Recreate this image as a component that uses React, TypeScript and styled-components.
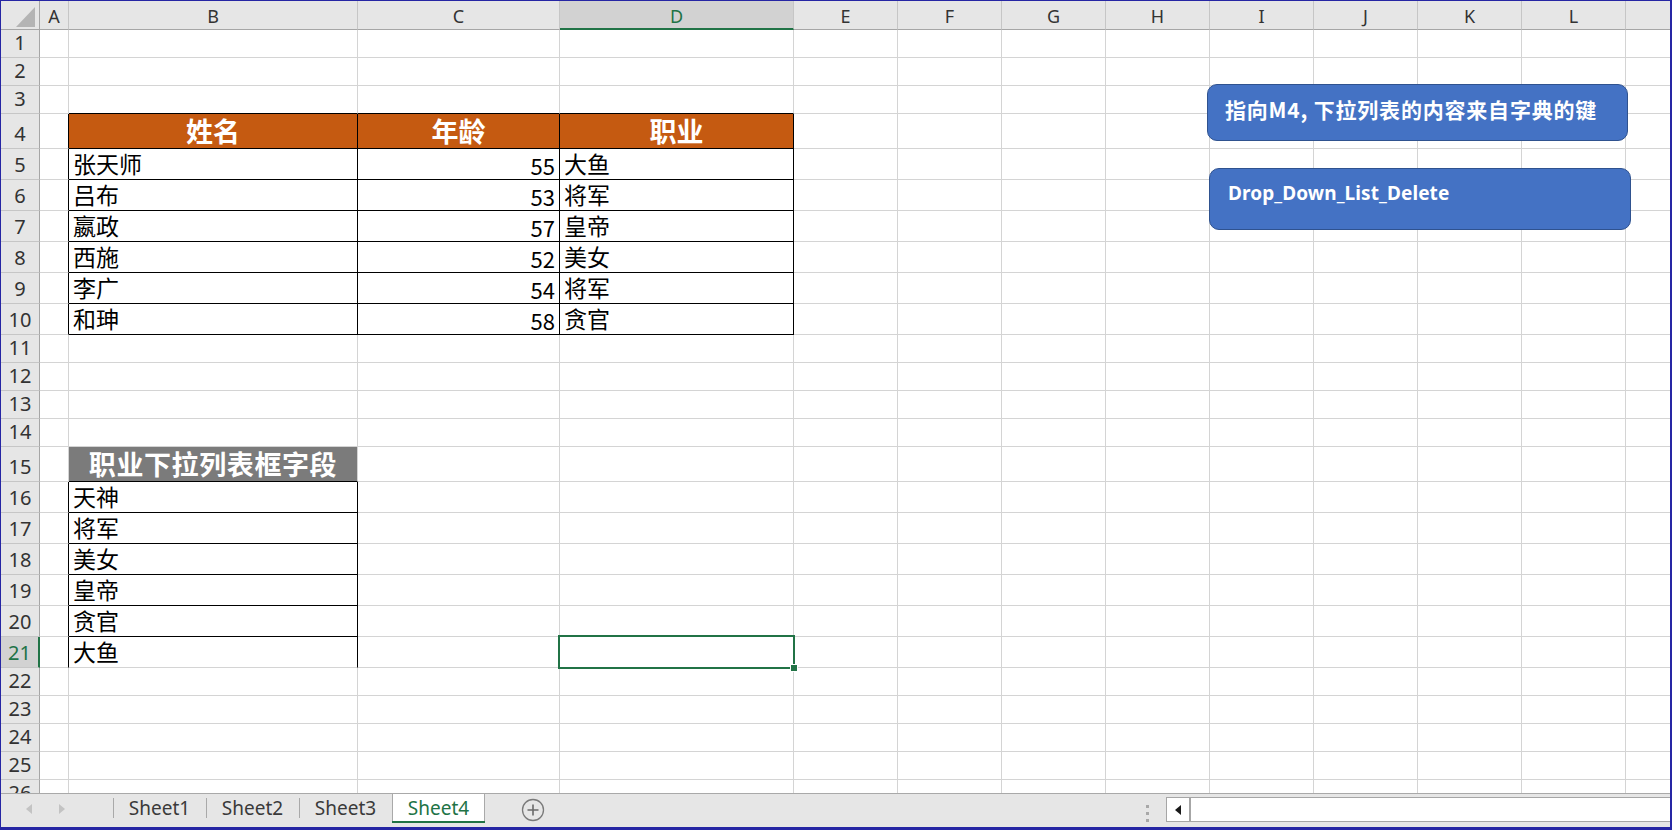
import React from 'react';
import styled, { createGlobalStyle } from 'styled-components';

type Kind = 'blank' | 'head' | 'field' | 'text' | 'num';

interface CellData {
  text: string;
  kind: Kind;
}

const GREEN = '#217346';
const GRID = '#d4d4d4';
const BLACK = '#000000';

const COLUMNS = ['A', 'B', 'C', 'D', 'E', 'F', 'G', 'H', 'I', 'J', 'K', 'L', 'M'];
const COL_WIDTHS = [29, 289, 202, 234, 104, 104, 104, 104, 104, 104, 104, 104, 104];
const ROW_HEIGHTS = [
  28, 28, 28, 35, 31, 31, 31, 31, 31, 31, 28, 28, 28, 28, 35, 31, 31, 31, 31, 31, 31, 28, 28, 28, 28, 28,
];

const people = [
  ['张天师', '55', '大鱼'],
  ['吕布', '53', '将军'],
  ['嬴政', '57', '皇帝'],
  ['西施', '52', '美女'],
  ['李广', '54', '将军'],
  ['和珅', '58', '贪官'],
];
const jobs = ['天神', '将军', '美女', '皇帝', '贪官', '大鱼'];

const cells: Record<string, CellData> = {
  B4: { text: '姓名', kind: 'head' },
  C4: { text: '年龄', kind: 'head' },
  D4: { text: '职业', kind: 'head' },
  B15: { text: '职业下拉列表框字段', kind: 'field' },
};
people.forEach(([name, age, job], i) => {
  cells[`B${5 + i}`] = { text: name, kind: 'text' };
  cells[`C${5 + i}`] = { text: age, kind: 'num' };
  cells[`D${5 + i}`] = { text: job, kind: 'text' };
});
jobs.forEach((job, i) => {
  cells[`B${16 + i}`] = { text: job, kind: 'text' };
});

// table ranges with black borders: B4:D10 and B16:B21 (no bottom line on B21)
const inMain = (r: number, c: number) => r >= 4 && r <= 10 && c >= 1 && c <= 3;
const inList = (r: number, c: number) => r >= 16 && r <= 21 && c === 1;

const rightColor = (r: number, c: number) =>
  inMain(r, c) || inMain(r, c + 1) || inList(r, c) || inList(r, c + 1) ? BLACK : GRID;
const bottomColor = (r: number, c: number) =>
  inMain(r, c) || inMain(r + 1, c) || (inList(r, c) && r < 21) || inList(r + 1, c) ? BLACK : GRID;

const tabs = ['Sheet1', 'Sheet2', 'Sheet3', 'Sheet4'];

const App: React.FC = () => {
  return (
    <Frame>
      <GlobalStyle />
      <SheetArea>
        <Grid>
          <Corner>
            <svg width="39" height="29" viewBox="0 0 39 29">
              <polygon points="34,6 34,26 15,26" fill="#b4b4b4" />
            </svg>
          </Corner>
          {COLUMNS.map((c) => (
            <ColHead key={c} $active={c === 'D'}>
              {c}
            </ColHead>
          ))}
          {ROW_HEIGHTS.map((_, ri) => {
            const r = ri + 1;
            return (
              <React.Fragment key={r}>
                <RowHead $active={r === 21}>{r}</RowHead>
                {COLUMNS.map((c, ci) => {
                  const data = cells[`${c}${r}`];
                  return (
                    <Cell
                      key={c}
                      $kind={data ? data.kind : 'blank'}
                      $right={rightColor(r, ci)}
                      $bottom={bottomColor(r, ci)}
                    >
                      {data?.text}
                    </Cell>
                  );
                })}
              </React.Fragment>
            );
          })}
        </Grid>

        <Shape $left={1206} $top={83} $width={421} $height={57}>
          指向M4, 下拉列表的内容来自字典的键
        </Shape>
        <Shape $left={1208} $top={167} $width={422} $height={62} $latin>
          Drop_Down_List_Delete
        </Shape>

        <Selection>
          <FillHandle />
        </Selection>
      </SheetArea>

      <TabBar>
        <NavArrows>
          <svg width="8" height="12" viewBox="0 0 8 12">
            <polygon points="7,1 7,11 1,6" fill="#c3c3c3" />
          </svg>
          <svg width="8" height="12" viewBox="0 0 8 12">
            <polygon points="1,1 1,11 7,6" fill="#c3c3c3" />
          </svg>
        </NavArrows>
        {tabs.map((t) => (
          <Tab key={t} $active={t === 'Sheet4'}>
            {t}
          </Tab>
        ))}
        <AddSheet>
          <svg width="24" height="24" viewBox="0 0 24 24">
            <circle cx="12" cy="12" r="10.5" fill="none" stroke="#7a7a7a" strokeWidth="1.3" />
            <path d="M12 6.5v11M6.5 12h11" stroke="#6a6a6a" strokeWidth="1.6" />
          </svg>
        </AddSheet>
        <Spacer />
        <Grip>
          <i />
          <i />
          <i />
        </Grip>
        <HScroll>
          <ScrollButton>
            <svg width="8" height="12" viewBox="0 0 8 12">
              <polygon points="7,1 7,11 1,6" fill="#1a1a1a" />
            </svg>
          </ScrollButton>
          <ScrollTrack />
        </HScroll>
      </TabBar>
      <TaskStrip />
    </Frame>
  );
};

const GlobalStyle = createGlobalStyle`
  html, body {
    margin: 0;
    padding: 0;
    background: #ffffff;
  }
  body {
    font-family: "Noto Sans CJK SC", "Noto Sans", sans-serif;
  }
`;

const Frame = styled.div`
  position: relative;
  width: 1672px;
  height: 830px;
  box-sizing: border-box;
  border-style: solid;
  border-color: #2626a4;
  border-width: 1px 2px 3px 1px;
  display: flex;
  flex-direction: column;
  overflow: hidden;
  background: #ffffff;
`;

const SheetArea = styled.div`
  position: relative;
  height: 792px;
  overflow: hidden;
  flex-shrink: 0;
`;

const Grid = styled.div`
  display: grid;
  grid-template-columns: 39px ${COL_WIDTHS.map((w) => `${w}px`).join(' ')};
  grid-template-rows: 29px ${ROW_HEIGHTS.map((h) => `${h}px`).join(' ')};
`;

const Corner = styled.div`
  box-sizing: border-box;
  background: #e6e6e6;
  border-right: 1px solid #a6a6a6;
  border-bottom: 1px solid #a6a6a6;
  svg {
    display: block;
  }
`;

const ColHead = styled.div<{ $active?: boolean }>`
  box-sizing: border-box;
  background: ${(p) => (p.$active ? '#d2d2d2' : '#e6e6e6')};
  border-right: 1px solid #c6c6c6;
  border-bottom: ${(p) => (p.$active ? `2px solid ${GREEN}` : '1px solid #a6a6a6')};
  color: ${(p) => (p.$active ? GREEN : '#333333')};
  font-family: "Noto Sans", "Liberation Sans", sans-serif;
  font-size: 18px;
  display: flex;
  align-items: center;
  justify-content: center;
  padding-top: 2px;
  overflow: hidden;
`;

const RowHead = styled.div<{ $active?: boolean }>`
  box-sizing: border-box;
  background: ${(p) => (p.$active ? '#d2d2d2' : '#e6e6e6')};
  border-right: ${(p) => (p.$active ? `2px solid ${GREEN}` : '1px solid #a6a6a6')};
  border-bottom: 1px solid #c6c6c6;
  color: ${(p) => (p.$active ? GREEN : '#333333')};
  font-family: "Noto Sans", "Liberation Sans", sans-serif;
  font-size: 20px;
  line-height: 22px;
  display: flex;
  align-items: flex-end;
  justify-content: center;
  padding-bottom: 3px;
`;

const kindStyles: Record<Kind, string> = {
  blank: '',
  head: `
    background: #c55a11;
    color: #ffffff;
    font-weight: 700;
    font-size: 27px;
    justify-content: center;
  `,
  field: `
    background: #7b7b7b;
    color: #ffffff;
    font-weight: 700;
    font-size: 27px;
    letter-spacing: 0.6px;
    justify-content: center;
  `,
  text: `
    color: #000000;
    font-size: 23px;
    justify-content: flex-start;
  `,
  num: `
    color: #000000;
    font-size: 22px;
    justify-content: flex-end;
  `,
};

const Cell = styled.div<{ $kind: Kind; $right: string; $bottom: string }>`
  box-sizing: border-box;
  border-right: 1px solid ${(p) => p.$right};
  border-bottom: 1px solid ${(p) => p.$bottom};
  display: flex;
  align-items: flex-end;
  padding: 0 4px 1px 4px;
  white-space: nowrap;
  line-height: 1.2;
  ${(p) => kindStyles[p.$kind]}
`;

const Shape = styled.div<{ $left: number; $top: number; $width: number; $height: number; $latin?: boolean }>`
  position: absolute;
  left: ${(p) => p.$left}px;
  top: ${(p) => p.$top}px;
  width: ${(p) => p.$width}px;
  height: ${(p) => p.$height}px;
  box-sizing: border-box;
  padding: ${(p) => (p.$latin ? '12px 18px' : '11px 17px')};
  background: #4472c4;
  border: 1.5px solid #2f528f;
  border-radius: 10px;
  color: #ffffff;
  font-family: ${(p) => (p.$latin ? '"Noto Sans", sans-serif' : '"Noto Sans CJK SC", sans-serif')};
  font-weight: 700;
  font-size: ${(p) => (p.$latin ? '19px' : '21px')};
  letter-spacing: ${(p) => (p.$latin ? '0.1px' : '0.8px')};
  line-height: 1.3;
  white-space: nowrap;
`;

const Selection = styled.div`
  position: absolute;
  left: 557px;
  top: 634px;
  width: 237px;
  height: 34px;
  box-sizing: border-box;
  border: 2px solid ${GREEN};
  pointer-events: none;
`;

const FillHandle = styled.div`
  position: absolute;
  right: -4px;
  bottom: -4px;
  width: 6px;
  height: 6px;
  background: ${GREEN};
  box-shadow: 0 0 0 1px #ffffff;
`;

const TabBar = styled.div`
  flex: 1;
  box-sizing: border-box;
  border-top: 1px solid #a9a9a9;
  background: #e6e6e6;
  display: flex;
  align-items: flex-start;
  font-family: "Noto Sans", "Liberation Sans", sans-serif;
`;

const NavArrows = styled.div`
  width: 112px;
  height: 29px;
  box-sizing: border-box;
  display: flex;
  align-items: center;
  gap: 25px;
  padding-left: 24px;
  svg {
    display: block;
  }
`;

const Tab = styled.div<{ $active?: boolean }>`
  position: relative;
  width: 93px;
  height: 29px;
  box-sizing: border-box;
  display: flex;
  align-items: center;
  justify-content: center;
  font-size: 19px;
  color: ${(p) => (p.$active ? GREEN : '#3a3a3a')};
  background: ${(p) => (p.$active ? '#ffffff' : 'transparent')};
  border-bottom: ${(p) => (p.$active ? `2px solid ${GREEN}` : '2px solid transparent')};
  box-shadow: ${(p) => (p.$active ? 'inset 1px 0 0 #a9a9a9, inset -1px 0 0 #a9a9a9' : 'none')};

  &::before {
    content: '';
    display: ${(p) => (p.$active ? 'none' : 'block')};
    position: absolute;
    left: 0;
    top: 4px;
    bottom: 3px;
    width: 1px;
    background: #a9a9a9;
  }
`;

const AddSheet = styled.div`
  margin-left: 36px;
  margin-top: 4px;
  svg {
    display: block;
  }
`;

const Spacer = styled.div`
  flex: 1;
`;

const Grip = styled.div`
  width: 4px;
  margin-top: 11px;
  margin-right: 16px;
  display: flex;
  flex-direction: column;
  gap: 4px;
  i {
    display: block;
    width: 3px;
    height: 3px;
    background: #a8a8a8;
  }
`;

const HScroll = styled.div`
  width: 504px;
  height: 25px;
  margin-top: 3px;
  box-sizing: border-box;
  border: 1px solid #a6a6a6;
  border-right: none;
  background: #ffffff;
  display: flex;
`;

const ScrollButton = styled.div`
  width: 24px;
  box-sizing: border-box;
  border-right: 2px solid #a6a6a6;
  display: flex;
  align-items: center;
  justify-content: center;
  svg {
    display: block;
  }
`;

const ScrollTrack = styled.div`
  flex: 1;
`;

const TaskStrip = styled.div`
  position: absolute;
  left: 1462px;
  bottom: -3px;
  width: 60px;
  height: 3px;
  background: #a9a9e6;
`;

export default App;
